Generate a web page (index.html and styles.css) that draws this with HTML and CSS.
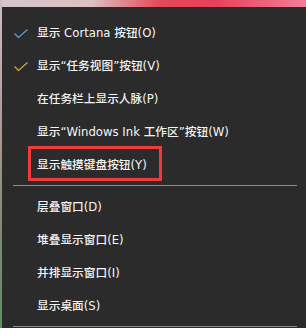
FILE: index.html
```html
<html>
  <head>
    <link rel="stylesheet" href="styles.css">
  </head>
  <body>
    <div class="desktop">
      <div class="menu">
        <div class="item">
          <svg class="check" width="14" height="10" viewBox="0 0 14 10"><path d="M0.5 4.5 L4.5 8.5 L13.5 0.5" /></svg>
          显示 Cortana 按钮(O)
        </div>
        <div class="item">
          <svg class="check warm" width="14" height="10" viewBox="0 0 14 10"><path d="M0.5 4.5 L4.5 8.5 L13.5 0.5" /></svg>
          显示“任务视图”按钮(V)
        </div>
        <div class="item">在任务栏上显示人脉(P)</div>
        <div class="item">显示“Windows Ink 工作区”按钮(W)</div>
        <div class="item">
          显示触摸键盘按钮(Y)
          <span class="highlight"></span>
        </div>
        <div class="separator"></div>
        <div class="item">层叠窗口(D)</div>
        <div class="item">堆叠显示窗口(E)</div>
        <div class="item">并排显示窗口(I)</div>
        <div class="item">显示桌面(S)</div>
        <div class="separator last"></div>
      </div>
    </div>
  </body>
</html>
```
FILE: styles.css
```css
body {
  margin: 0;
  width: 306px;
  height: 328px;
  overflow: hidden;
}

.desktop {
  height: 328px;
  padding: 7px 0 0 2px;
  box-sizing: border-box;
  background:
    linear-gradient(to bottom, #cdbfc2 0%, #b49a98 35%, #7f8a72 70%, #5c9260 100%) left top / 2px 100% no-repeat,
    linear-gradient(to right, #d3c6c9 0%, #dcc0c5 30%, #e24a58 52%, #e8405a 70%, #f07f96 100%) left top / 100% 7px no-repeat,
    #2b2b2b;
}

.menu {
  height: 321px;
  padding-top: 10px;
  box-sizing: border-box;
  background: #2b2b2b;
  font-family: "DejaVu Sans", "Noto Sans CJK SC", sans-serif;
  font-size: 11.7px;
  font-weight: 500;
  color: #f4f4f4;
}

.item {
  position: relative;
  height: 33px;
  line-height: 33px;
  padding-left: 35px;
  white-space: nowrap;
}

.check {
  position: absolute;
  left: 12px;
  top: 12px;
  fill: none;
  stroke: #5aa2e6;
  stroke-width: 1.2;
}

.check.warm {
  stroke: #d9a650;
}

.separator {
  height: 1px;
  margin: 3px 9px 5px 11px;
  background: #8c8c8c;
}

.separator.last {
  margin-bottom: 0;
}

.highlight {
  position: absolute;
  left: 26px;
  top: -3px;
  width: 134px;
  height: 35px;
  box-sizing: border-box;
  border: 3px solid #f23a3a;
}
```
